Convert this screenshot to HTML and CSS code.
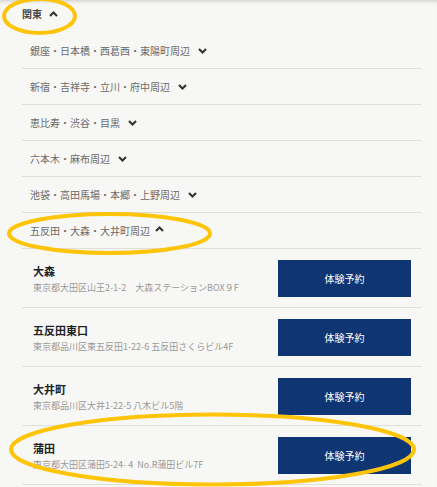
FILE: index.html
```html
<!DOCTYPE html>
<html lang="ja">
<head>
<meta charset="utf-8">
<link rel="stylesheet" href="styles.css">
</head>
<body>
<div class="page">
  <div class="region">
    <span>関東</span>
    <svg class="chev up" viewBox="0 0 9 6"><polyline points="1,5 4.5,1.5 8,5"/></svg>
  </div>
  <ul class="areas">
    <li class="area"><span>銀座・日本橋・西葛西・東陽町周辺</span><svg class="chev" viewBox="0 0 9 6"><polyline points="1,1 4.5,4.5 8,1"/></svg></li>
    <li class="area"><span>新宿・吉祥寺・立川・府中周辺</span><svg class="chev" viewBox="0 0 9 6"><polyline points="1,1 4.5,4.5 8,1"/></svg></li>
    <li class="area"><span>恵比寿・渋谷・目黒</span><svg class="chev" viewBox="0 0 9 6"><polyline points="1,1 4.5,4.5 8,1"/></svg></li>
    <li class="area"><span>六本木・麻布周辺</span><svg class="chev" viewBox="0 0 9 6"><polyline points="1,1 4.5,4.5 8,1"/></svg></li>
    <li class="area"><span>池袋・高田馬場・本郷・上野周辺</span><svg class="chev" viewBox="0 0 9 6"><polyline points="1,1 4.5,4.5 8,1"/></svg></li>
    <li class="area open"><span>五反田・大森・大井町周辺</span><svg class="chev up" viewBox="0 0 9 6"><polyline points="1,5 4.5,1.5 8,5"/></svg></li>
    <li class="store">
      <div class="info"><div class="name">大森</div><div class="addr">東京都大田区山王2-1-2　大森ステーションBOX９F</div></div>
      <a class="btn">体験予約</a>
    </li>
    <li class="store">
      <div class="info"><div class="name">五反田東口</div><div class="addr">東京都品川区東五反田1-22-6 五反田さくらビル4F</div></div>
      <a class="btn">体験予約</a>
    </li>
    <li class="store">
      <div class="info"><div class="name">大井町</div><div class="addr">東京都品川区大井1-22-5 八木ビル5階</div></div>
      <a class="btn">体験予約</a>
    </li>
    <li class="store">
      <div class="info"><div class="name">蒲田</div><div class="addr">東京都大田区蒲田5-24- 4&nbsp; No.R蒲田ビル7F</div></div>
      <a class="btn">体験予約</a>
    </li>
  </ul>
  <svg class="marks" viewBox="0 0 437 487" width="437" height="487">
    <ellipse cx="39.5" cy="16" rx="35.5" ry="17"/>
    <ellipse cx="109.5" cy="233.5" rx="100.5" ry="19.5"/>
    <ellipse cx="212.5" cy="449.5" rx="201.5" ry="35"/>
  </svg>
</div>
</body>
</html>
```

FILE: styles.css
```css
html, body {
  margin: 0;
  padding: 0;
  background: #f7f7f5;
}
body {
  font-family: "Noto Sans CJK JP", "Noto Sans", sans-serif;
}
.page {
  position: relative;
  width: 437px;
  height: 487px;
  overflow: hidden;
  box-shadow: inset 0 4px 4px -3px rgba(0, 0, 0, 0.18);
}
.region {
  height: 33px;
  box-sizing: border-box;
  padding: 8px 0 0 22px;
  display: flex;
  align-items: flex-start;
  gap: 7px;
  font-size: 10px;
  line-height: 12px;
  font-weight: bold;
  color: #444;
}
.region .chev {
  margin-top: 3px;
}
.chev {
  width: 9px;
  height: 6px;
  fill: none;
  stroke: #333;
  stroke-width: 2.1;
  flex: none;
}
.areas {
  list-style: none;
  margin: 0 0 0 22px;
  padding: 0;
  width: 400px;
}
.area {
  height: 36px;
  box-sizing: border-box;
  border-bottom: 1px solid #dededc;
  padding-left: 8px;
  display: flex;
  align-items: center;
  gap: 8px;
  font-size: 10px;
  color: #6a6a6a;
}
.area.open {
  gap: 5px;
}
.area.open .chev {
  margin-top: -3px;
}
.store {
  height: 59px;
  box-sizing: border-box;
  border-bottom: 1px solid #dededc;
  padding: 11px 11px 10px 11px;
  display: flex;
  align-items: center;
  justify-content: space-between;
}
.info {
  display: flex;
  flex-direction: column;
  gap: 2px;
}
.name {
  font-size: 11px;
  line-height: 16px;
  font-weight: bold;
  color: #222;
}
.addr {
  font-size: 9px;
  line-height: 14px;
  color: #9a9a9a;
  white-space: nowrap;
}
.btn {
  width: 133px;
  height: 37px;
  flex: none;
  background: #0f3572;
  color: #fff;
  font-size: 10px;
  display: flex;
  align-items: center;
  justify-content: center;
}
.marks {
  position: absolute;
  left: 0;
  top: 0;
  pointer-events: none;
  fill: none;
  stroke: #fdc408;
  stroke-width: 4;
}
```
